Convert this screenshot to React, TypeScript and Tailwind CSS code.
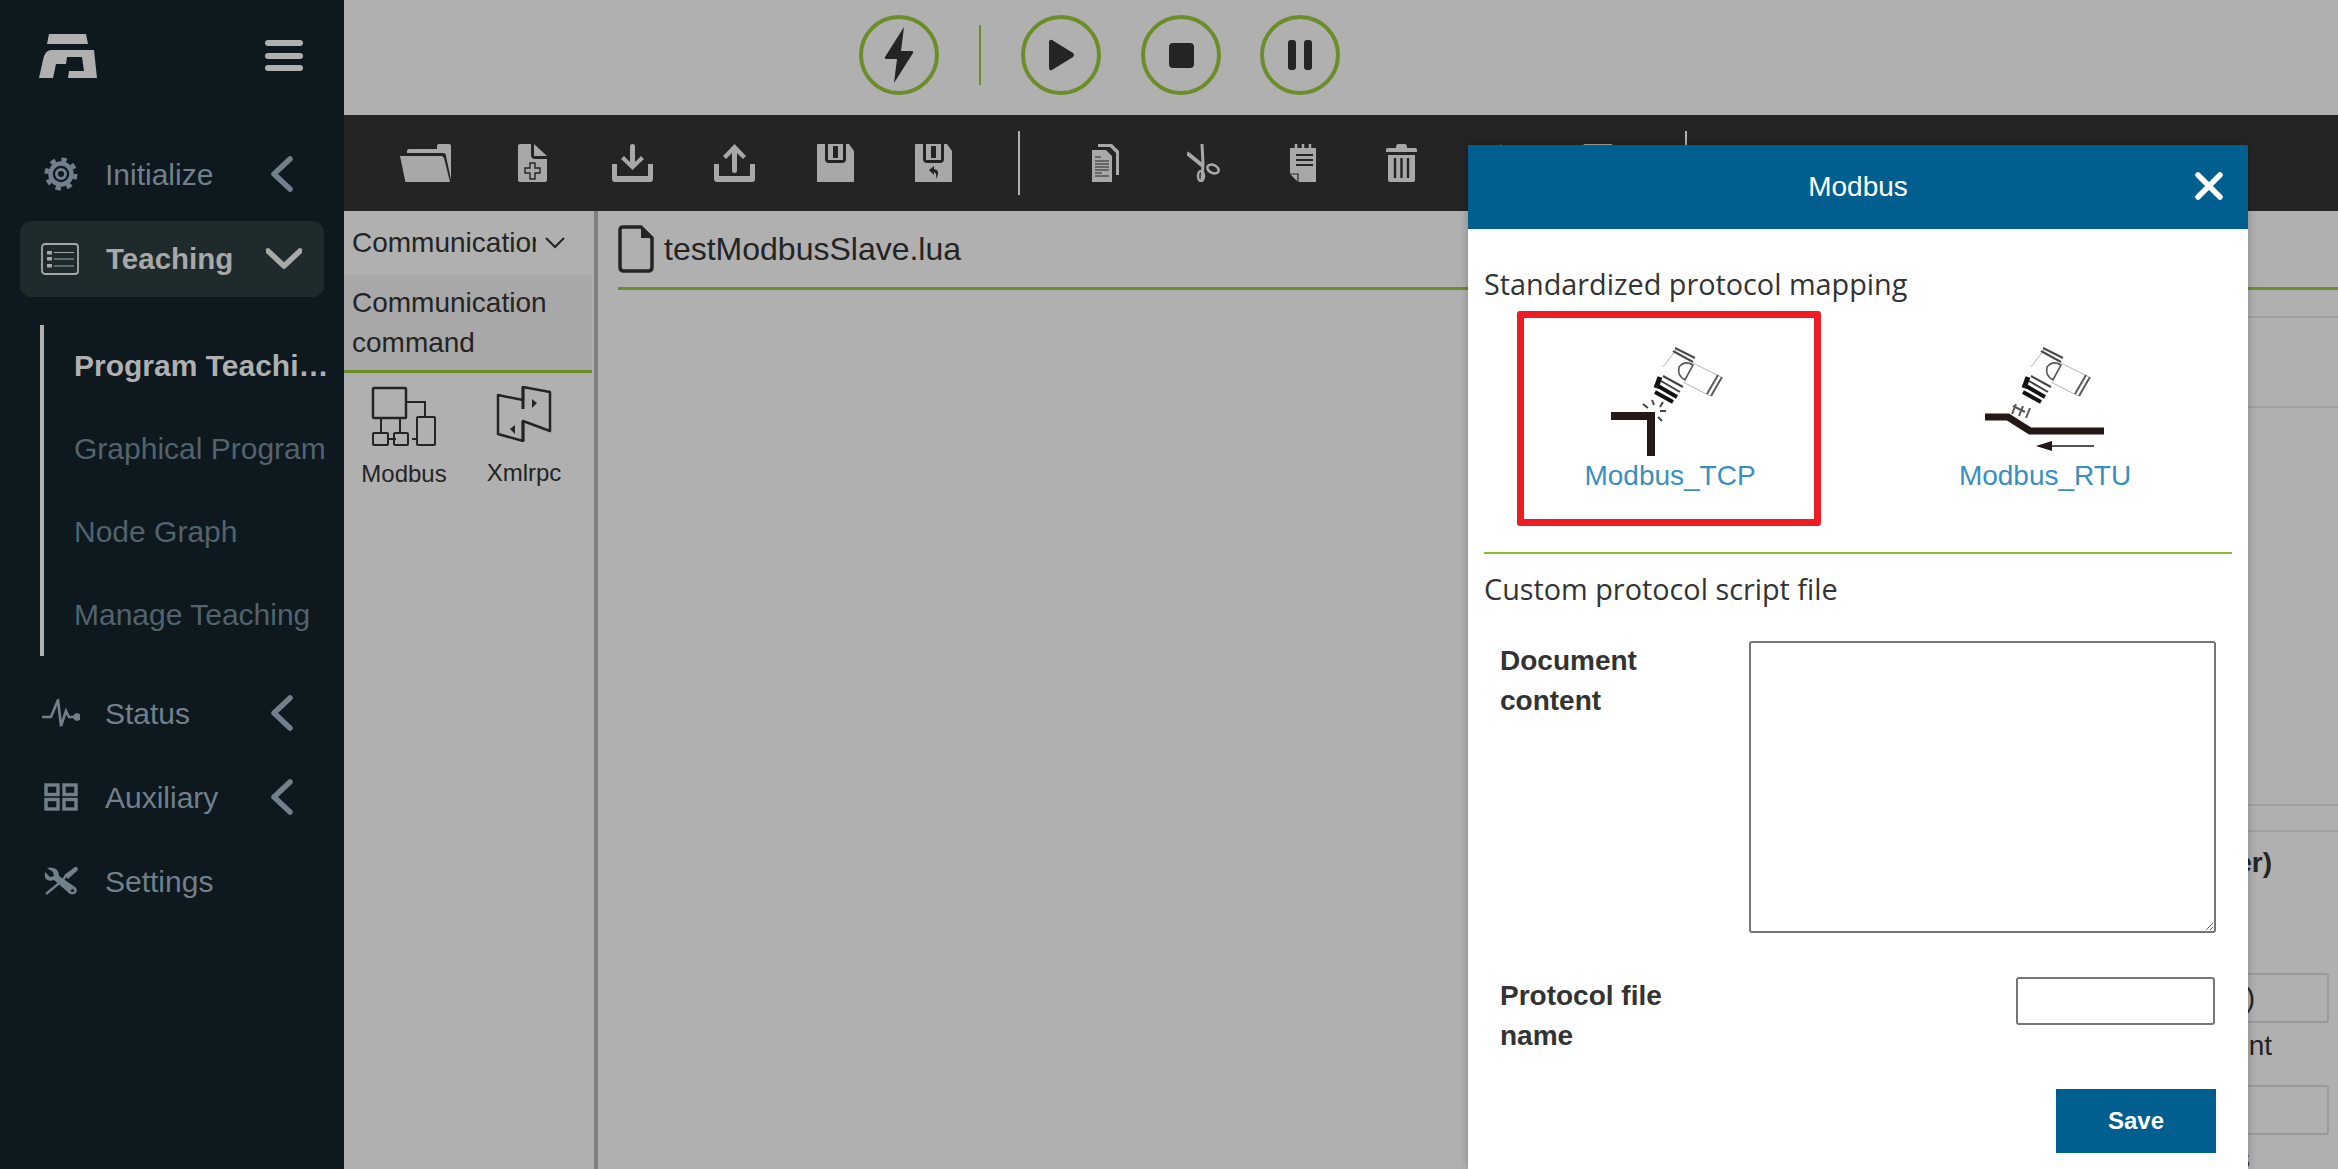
const sans = "font-['Liberation_Sans',Arial,sans-serif]";

function Chevron({ down = false, className = "" }: { down?: boolean; className?: string }) {
  return (
    <svg width="36" height="36" viewBox="0 0 36 36" className={className}>
      <polyline
        points={down ? "2,10 18,25 34,10" : "26,3 10,18 26,33"}
        fill="none"
        stroke="currentColor"
        strokeWidth="5.5"
        strokeLinecap="round"
        strokeLinejoin="round"
      />
    </svg>
  );
}

function Logo() {
  return (
    <svg width="58" height="46" viewBox="0 0 58 46" fill="#b0b0b0">
      <path d="M10 1H47L49 11H8Z" />
      <path d="M12 17H55L58 45H29L30 38H45L43 24H28L27 31H17L14 45H0L4 27Q6 17 12 17Z" />
    </svg>
  );
}

function Gear() {
  return (
    <svg width="36" height="36" viewBox="0 0 36 36" fill="none" stroke="currentColor">
      <circle cx="18" cy="18" r="14.5" strokeWidth="4" strokeDasharray="5.4 5.98" />
      <circle cx="18" cy="18" r="10.5" strokeWidth="4.5" />
      <circle cx="18" cy="18" r="4.5" strokeWidth="3" />
    </svg>
  );
}

function ListBox() {
  return (
    <svg width="38" height="32" viewBox="0 0 38 32" fill="none" stroke="#a8a8a8">
      <rect x="1" y="1" width="36" height="30" rx="3" strokeWidth="1.8" />
      <rect x="6" y="8" width="5" height="3.5" fill="#a8a8a8" stroke="none" />
      <rect x="6" y="14" width="5" height="3.5" fill="#a8a8a8" stroke="none" />
      <rect x="6" y="21" width="5" height="3.5" fill="#a8a8a8" stroke="none" />
      <path d="M13 9.5H33M13 16H33M13 23H33" strokeWidth="1.2" />
    </svg>
  );
}

function Pulse() {
  return (
    <svg width="38" height="28" viewBox="0 0 38 28" fill="none" stroke="currentColor" strokeWidth="2.6">
      <path d="M0 18H9L16 1L19 27L24 12L27 18H36" />
      <circle cx="35" cy="18" r="2.4" fill="currentColor" />
    </svg>
  );
}

function Grid4() {
  return (
    <svg width="34" height="28" viewBox="0 0 34 28" fill="none" stroke="currentColor" strokeWidth="3.4">
      <rect x="2" y="2" width="12" height="9.5" />
      <rect x="20" y="2" width="12" height="9.5" />
      <rect x="2" y="16.5" width="12" height="9.5" />
      <rect x="20" y="16.5" width="12" height="9.5" />
    </svg>
  );
}

// wrench from the upper left, screwdriver from the upper right
function Tools() {
  return (
    <svg width="34" height="28" viewBox="0 0 34 28" fill="currentColor" stroke="currentColor">
      <path d="M3 1L9 5L10 9L6 10L1 5Q0 9 2 12Q5 15 10 13L26 27Q30 28 32 26Q34 22 31 20L15 9Q15 3 10 1Q6 0 3 1Z" stroke="none" />
      <path d="M33 0L22 8L19 13L2 27" fill="none" strokeWidth="2.4" />
      <path d="M33 0L34 3L24 12L21 9Z" stroke="none" />
      <circle cx="28.5" cy="23.5" r="1.6" fill="#0d181f" stroke="none" />
    </svg>
  );
}

function SideRow({ icon, label, arrow = true }: { icon: React.ReactNode; label: string; arrow?: boolean }) {
  return (
    <div className="flex h-[84px] items-center text-[#71808a]">
      <div className="ml-[41px] flex w-[40px] justify-center">{icon}</div>
      <span className="ml-[24px] text-[30px]">{label}</span>
      {arrow && <Chevron className="ml-auto mr-[44px]" />}
    </div>
  );
}

function RoundButton({ children }: { children: React.ReactNode }) {
  return (
    <div className="flex h-[80px] w-[80px] items-center justify-center rounded-full border-[4px] border-[#6c8e28]">
      {children}
    </div>
  );
}

function ToolHead({ x, y }: { x: number; y: number }) {
  return (
    <g transform={`translate(${x} ${y})`} fill="none" strokeLinecap="butt">
      <path d="M23 4L10 21M40 17L68 31M30 36L57 50" stroke="#b5b5b5" strokeWidth="1" />
      <path d="M22 2L42 12M20 5L40 16" stroke="#4a4a4a" strokeWidth="2" />
      <path d="M69 31L58 50M65 29L54 48" stroke="#5a5a5a" strokeWidth="2" />
      <path d="M26 21Q32 14 40 19L32 34Q24 30 26 21Z" stroke="#555" strokeWidth="1.6" />
      <path d="M10 30L30 41M8 35L27 46" stroke="#444" strokeWidth="2" />
      <path d="M7 31L3 42" stroke="#111" strokeWidth="5" />
      <path d="M5 40L24 51M2 46L20 56" stroke="#111" strokeWidth="4" />
    </g>
  );
}

function TcpPicture() {
  return (
    <svg width="122" height="116" viewBox="0 0 122 116" fill="none" className="-translate-x-[1px]">
      <ToolHead x={46} y={4} />
      <path d="M4 74H44V114" stroke="#231815" strokeWidth="8" />
      <path
        d="M36 62L41 66M45 58L47 63M56 60L53 65M59 69L53 69M55 79L51 75"
        stroke="#444"
        strokeWidth="2"
      />
    </svg>
  );
}

function RtuPicture() {
  return (
    <svg width="122" height="116" viewBox="0 0 122 116" fill="none">
      <ToolHead x={37} y={4} />
      <path d="M32 62L28 72M39 64L35 74M46 66L42 76M29 64L41 70" stroke="#555" strokeWidth="2" />
      <path d="M1 75H24L46 89H120" stroke="#231815" strokeWidth="7" />
      <path d="M54 104H110" stroke="#555" strokeWidth="2" />
      <path d="M52 104L68 99V109Z" fill="#231815" />
    </svg>
  );
}

const ico = "fill-[#a8a8a8]";

function ToolbarIcons() {
  return (
    <>
      <svg width="51" height="38" viewBox="0 0 51 38" className={ico}>
        <path d="M7 7Q7 5 9 5H37V2Q37 0 39 0H49Q51 0 51 2V36L46 12Q46 9 43 9H7Z" />
        <path d="M0 12H41Q43 12 44 14L50 38H6Q5 38 5 36Z" />
      </svg>
      <svg width="29" height="38" viewBox="0 0 29 38" className={`ml-[67px] ${ico}`}>
        <path d="M0 2Q0 0 2 0H13V11Q13 15 17 15H29V36Q29 38 27 38H2Q0 38 0 36Z" />
        <path d="M16 0L29 12H16Z" />
        <path d="M12 19H17V24H22V29H17V35H12V29H7V24H12Z" fill="#a8a8a8" stroke="#242424" strokeWidth="1.4" />
      </svg>
      <svg width="41" height="38" viewBox="0 0 41 38" className={`ml-[65px] ${ico}`}>
        <path d="M18 2Q18 0 20.5 0T23 2V18L29 12L32 15L20.500 26L9 15L12 12L18 18Z" />
        <path d="M0 20H5V32H36V20H41V35Q41 38 38 38H3Q0 38 0 35Z" />
      </svg>
      <svg width="41" height="38" viewBox="0 0 41 38" className={`ml-[61px] ${ico}`}>
        <path d="M18 27V9L12 15L9 12L20.500 0L32 12L29 15L23 9V27Q23 29 20.500 29T18 27Z" />
        <path d="M0 20H5V32H36V20H41V35Q41 38 38 38H3Q0 38 0 35Z" />
      </svg>
      <svg width="37" height="38" viewBox="0 0 37 38" className={`ml-[62px] ${ico}`}>
        <path d="M0 1Q0 0 1 0H8V15Q8 19 12 19H25Q29 19 29 15V0H32L37 7V38H0Z" />
        <path d="M11 0H26V16H11Z" />
        <rect x="16" y="2" width="5" height="12" fill="#242424" />
      </svg>
      <svg width="37" height="38" viewBox="0 0 37 38" className={`ml-[61px] ${ico}`}>
        <path d="M0 1Q0 0 1 0H8V15Q8 19 12 19H25Q29 19 29 15V0H32L37 7V38H0Z" />
        <path d="M11 0H26V16H11Z" />
        <rect x="16" y="2" width="5" height="12" fill="#242424" />
        <path d="M14 26L19 22V25Q26 26 21 35Q22 29 19 28V31Z" fill="#242424" />
      </svg>
      <div className="ml-[66px] h-[64px] w-[2px] bg-[#b0b0b0]" />
      <svg width="27" height="38" viewBox="0 0 27 38" className={`ml-[72px] ${ico}`}>
        <path d="M6 0H20L27 7V31H24V9L18 3H6Z" />
        <path d="M0 6H14L20 12V38H0Z" />
        <path d="M3 13H9M3 17H17M3 20H17M3 23H17M3 26H17M3 29H10M3 32H17" stroke="#242424" strokeWidth="1" />
      </svg>
      <svg width="34" height="38" viewBox="0 0 34 38" className={`ml-[68px] ${ico}`} fill="none">
        <path d="M15 0L16 20L15 36" stroke="#a8a8a8" strokeWidth="3" fill="none" />
        <path d="M0 9L16 22" stroke="#a8a8a8" strokeWidth="4" fill="none" />
        <ellipse cx="14" cy="32" rx="3" ry="5" fill="none" stroke="#a8a8a8" strokeWidth="2.5" />
        <ellipse cx="26" cy="25" rx="6" ry="4" transform="rotate(25 26 25)" fill="none" stroke="#a8a8a8" strokeWidth="2.5" />
      </svg>
      <svg width="26" height="38" viewBox="0 0 26 38" className={`ml-[69px] ${ico}`}>
        <path d="M0 4H26V38H8L0 30Z" />
        <path d="M6 0V7M13 0V7M20 0V7" stroke="#a8a8a8" strokeWidth="2.500" />
        <path d="M6 11H23M6 16H23M6 21H23" stroke="#242424" strokeWidth="2" />
        <path d="M8 38V30H0" fill="none" stroke="#242424" strokeWidth="1.200" />
      </svg>
      <svg width="31" height="38" viewBox="0 0 31 38" className={`ml-[70px] ${ico}`}>
        <path d="M12 0H19Q21 0 21 4H29Q31 4 31 6V8H0V6Q0 4 2 4H10Q10 0 12 0Z" />
        <path d="M2 11H29V36Q29 38 27 38H4Q2 38 2 36Z" />
        <path d="M9 14V34M15.500 14V34M22 14V34" stroke="#242424" strokeWidth="2.400" />
      </svg>
      <svg width="30" height="38" viewBox="0 0 30 38" className={`ml-[68px] ${ico}`}>
        <path d="M12 8L16 0L20 8V38H12Z" />
      </svg>
      <svg width="30" height="38" viewBox="0 0 30 38" className={`ml-[68px] ${ico}`}>
        <rect width="30" height="38" rx="2" />
      </svg>
      <div className="ml-[72px] h-[64px] w-[2px] bg-[#b0b0b0]" />
    </>
  );
}

function ModbusIcon() {
  return (
    <svg width="66" height="60" viewBox="0 0 66 60" fill="none" stroke="#242424">
      <rect x="2" y="2" width="33" height="30" rx="1" strokeWidth="2.500" />
      <path d="M35 16H54V30M10 32V48M29 32V48M18 53H25M41 53H46" strokeWidth="2" />
      <rect x="2" y="47" width="15" height="12" rx="1" strokeWidth="2" />
      <rect x="23" y="47" width="14" height="12" rx="1" strokeWidth="2" />
      <rect x="46" y="31" width="18" height="28" rx="1" strokeWidth="2" />
    </svg>
  );
}

function XmlrpcIcon() {
  return (
    <svg width="56" height="56" viewBox="0 0 56 56" fill="none" stroke="#242424">
      <path d="M27 14L2 9V48L27 55V35L54 45V6L27 1Z" strokeWidth="2.500" strokeLinejoin="round" />
      <path d="M27 1V23M27 35V55" strokeWidth="3" />
      <path d="M36 13L41 17L36 22Z" fill="#242424" stroke="none" />
      <path d="M19 39L14 43L19 48Z" fill="#242424" stroke="none" />
    </svg>
  );
}

function ModbusDialog() {
  return (
    <div className={`absolute left-[1468px] top-[145px] bottom-0 w-[780px] bg-white text-[#333] shadow-[0_0_8px_rgba(0,0,0,0.25)] ${sans}`}>
      <div className="relative flex h-[84px] items-center justify-center bg-[#005f8f] text-[28px] text-white">
        Modbus
        <svg width="28" height="28" viewBox="0 0 28 28" className="absolute right-[25px] top-[27px]">
          <path d="M3 3L25 25M25 3L3 25" stroke="#fff" strokeWidth="5.500" strokeLinecap="round" />
        </svg>
      </div>
      <div className="px-[16px]">
        <div className="mt-[35px] font-['Open_Sans',sans-serif] text-[28.800px] leading-[40px]">
          Standardized protocol mapping
        </div>
        <div className="mt-[7px] flex gap-[72px] pl-[33px]">
          <div className="flex h-[215px] w-[304px] flex-col items-center rounded-[3px] border-[7px] border-[#ee1c25] pt-[24px]">
            <TcpPicture />
            <span className="mt-[2px] translate-x-[1px] text-[28px] leading-[32px] text-[#3a8fc0]">Modbus_TCP</span>
          </div>
          <div className="flex h-[215px] w-[304px] flex-col items-center border-[7px] border-transparent pt-[24px]">
            <RtuPicture />
            <span className="mt-[2px] text-[28px] leading-[32px] text-[#3a8fc0]">Modbus_RTU</span>
          </div>
        </div>
        <div className="mt-[26px] h-[2px] bg-[#8bbb34]" />
        <div className="mt-[15px] font-['Open_Sans',sans-serif] text-[28.800px] leading-[40px]">
          Custom protocol script file
        </div>
        <div className="mt-[30px] flex items-start pl-[16px]">
          <div className="w-[249px] pt-[2px] text-[28px] font-bold leading-[40px]">
            Document
            <br />
            content
          </div>
          <textarea className="mt-[2px] h-[292px] w-[467px] rounded-[3px] border-2 border-[#767676] bg-white" />
        </div>
        <div className="mt-[43px] flex items-start justify-between pl-[16px] pr-[17px]">
          <div className="text-[28px] font-bold leading-[40px]">
            Protocol file
            <br />
            name
          </div>
          <input className="mt-[1px] h-[48px] w-[199px] rounded-[3px] border-2 border-[#767676] bg-white" />
        </div>
        <div className="mt-[33px] flex justify-end pr-[16px]">
          <button className="h-[64px] w-[160px] bg-[#005f8f] text-[24px] font-bold text-white">Save</button>
        </div>
      </div>
    </div>
  );
}

export default function App() {
  return (
    <div className={`relative flex h-[1169px] w-full overflow-hidden bg-[#b0b0b0] text-[#242424] ${sans}`}>
      <aside className="w-[344px] shrink-0 bg-[#0d181f]">
        <div className="flex h-[115px] items-center justify-between pb-[4px] pl-[39px] pr-[41px]">
          <Logo />
          <div className="flex flex-col gap-[6.500px]">
            <div className="h-[6px] w-[38px] rounded-full bg-[#b0b0b0]" />
            <div className="h-[6px] w-[38px] rounded-full bg-[#b0b0b0]" />
            <div className="h-[6px] w-[38px] rounded-full bg-[#b0b0b0]" />
          </div>
        </div>
        <div className="pt-[17px]">
          <SideRow icon={<Gear />} label="Initialize" />
        </div>
        <div className="mx-[20px] mt-[5px] flex h-[76px] items-center rounded-[12px] bg-[#1f2a2d] text-[#a8a8a8]">
          <div className="ml-[21px]">
            <ListBox />
          </div>
          <span className="ml-[27px] text-[29.500px] font-bold">Teaching</span>
          <Chevron down className="ml-auto mr-[22px]" />
        </div>
        <div className="ml-[40px] mt-[28px] h-[331px] border-l-[4px] border-[#b0b0b0] pl-[30px] text-[30px] text-[#52636d]">
          <div className="flex h-[83px] w-[256px] items-center pb-[2px]">
            <span className="truncate font-bold text-[#b0b0b0]">Program Teaching</span>
          </div>
          <div className="flex h-[83px] items-center pb-[2px]">Graphical Program</div>
          <div className="flex h-[83px] items-center pb-[2px]">Node Graph</div>
          <div className="flex h-[83px] items-center pb-[2px]">Manage Teaching</div>
        </div>
        <div className="mt-[15px]">
          <SideRow icon={<Pulse />} label="Status" />
          <SideRow icon={<Grid4 />} label="Auxiliary" />
          <SideRow icon={<Tools />} label="Settings" arrow={false} />
        </div>
      </aside>

      <main className="flex min-w-0 flex-1 flex-col">
        <div className="flex h-[115px] items-center pb-[5px] pl-[515px]">
          <RoundButton>
            <svg width="30" height="56" viewBox="0 0 30 56">
              <path d="M20 0L1 30Q0 32 3 32H13L10 56L29 26Q30 24 27 24H17Z" fill="#242424" />
            </svg>
          </RoundButton>
          <div className="mx-[40px] h-[60px] w-[2px] bg-[#6c8e28]" />
          <RoundButton>
            <svg width="28" height="32" viewBox="0 0 28 32">
              <path d="M2 3Q2 0 5 1L26 14Q28 16 26 18L5 31Q2 32 2 29Z" fill="#242424" />
            </svg>
          </RoundButton>
          <div className="ml-[40px]">
            <RoundButton>
              <div className="h-[25px] w-[25px] rounded-[4px] bg-[#242424]" />
            </RoundButton>
          </div>
          <div className="ml-[39px]">
            <RoundButton>
              <div className="flex gap-[8px]">
                <div className="h-[30px] w-[8px] rounded-[3px] bg-[#242424]" />
                <div className="h-[30px] w-[8px] rounded-[3px] bg-[#242424]" />
              </div>
            </RoundButton>
          </div>
        </div>

        <div className="flex h-[96px] items-center bg-[#242424] pl-[56px]">
          <ToolbarIcons />
        </div>

        <div className="flex min-h-0 flex-1">
          <div className="w-[250px] shrink-0 text-[28px]">
            <div className="flex h-[64px] items-center pl-[8px]">
              <span className="w-[184px] overflow-hidden whitespace-nowrap">Communication</span>
              <svg width="20" height="12" viewBox="0 0 20 12" className="ml-[9px]">
                <path d="M1 1L10 10L19 1" fill="none" stroke="#242424" strokeWidth="2" />
              </svg>
            </div>
            <div className="mr-[2px] h-[98px] border-b-[3px] border-[#6c8e28] bg-[#a8a8a8] pl-[8px] pt-[8px] leading-[40px]">
              Communication
              <br />
              command
            </div>
            <div className="flex pt-[13px] text-[24px]">
              <div className="ml-[17px] flex w-[86px] flex-col items-center gap-[14px]">
                <ModbusIcon />
                <span className="leading-[28px]">Modbus</span>
              </div>
              <div className="ml-[39px] flex w-[76px] flex-col items-center gap-[17px]">
                <XmlrpcIcon />
                <span className="leading-[28px]">Xmlrpc</span>
              </div>
            </div>
          </div>
          <div className="w-[4px] shrink-0 bg-[#808080]" />
          <div className="flex min-w-0 flex-1 flex-col pl-[20px]">
            <div className="flex h-[79px] shrink-0 items-center gap-[10px] border-b-[3px] border-[#6c8e28] text-[32px]">
              <svg width="36" height="48" viewBox="0 0 36 48" fill="none">
                <path d="M5 2H23L34 13V42Q34 46 30 46H6Q2 46 2 42V5Q2 2 5 2Z" stroke="#242424" strokeWidth="3.500" />
                <path d="M23 2L34 13H23Z" fill="#242424" />
              </svg>
              testModbusSlave.lua
            </div>
            <div className="ml-auto w-[500px] text-[28px]">
              <div className="mt-[26px] h-[92px] border-y-2 border-[#a0a0a0]" />
              <div className="h-[398px] border-b-2 border-[#a0a0a0]" />
              <div className="h-[26px] border-b-2 border-[#a0a0a0]" />
              <div className="mt-[13px] pr-[66px] text-right font-bold leading-[36px] text-[#242424]">er)</div>
              <div className="ml-auto mr-[9px] mt-[92px] flex h-[50px] w-[300px] items-center justify-end rounded-[3px] border-2 border-[#9a9a9a] pr-[72px]">
                0)
              </div>
              <div className="pr-[66px] pt-[5px] text-right leading-[36px]">ent</div>
              <div className="ml-auto mr-[9px] mt-[21px] h-[50px] w-[300px] rounded-[3px] border-2 border-[#9a9a9a]" />
              <div className="pr-[88px] pt-[6px] text-right leading-[36px]">s</div>
            </div>
          </div>
        </div>
      </main>

      <ModbusDialog />
    </div>
  );
}
